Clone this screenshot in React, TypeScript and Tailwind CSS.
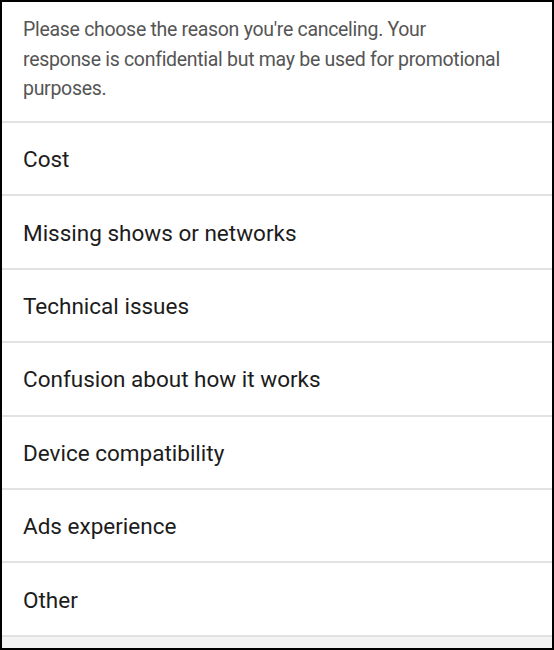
import React from "react";

const items = [
  "Cost",
  "Missing shows or networks",
  "Technical issues",
  "Confusion about how it works",
  "Device compatibility",
  "Ads experience",
  "Other",
];

export default function App() {
  return (
    <div
      className="w-[554px] h-[650px] border-2 border-black bg-white flex flex-col overflow-hidden"
      style={{ fontFamily: "Roboto, 'Liberation Sans', sans-serif" }}
    >
      <div className="h-[119px] shrink-0 pl-[21px] pt-[13px] text-[19.5px] tracking-[-0.3px] leading-[29.5px] text-[#555555]">
        <div className="w-[482px]">
          Please choose the reason you're canceling. Your response is confidential but may be used for promotional purposes.
        </div>
      </div>
      {items.map((t) => (
        <div key={t} className="shrink-0 flex flex-col">
          <div className="h-[2px] bg-[#e2e2e2]" />
          <div className="h-[71.4px] flex items-center pl-[21px] pt-[3px] text-[22.5px] text-[#1c1c1c]">
            {t}
          </div>
        </div>
      ))}
      <div className="h-[2px] shrink-0 bg-[#e2e2e2]" />
      <div className="flex-1 bg-[#f3f3f3]" />
    </div>
  );
}
